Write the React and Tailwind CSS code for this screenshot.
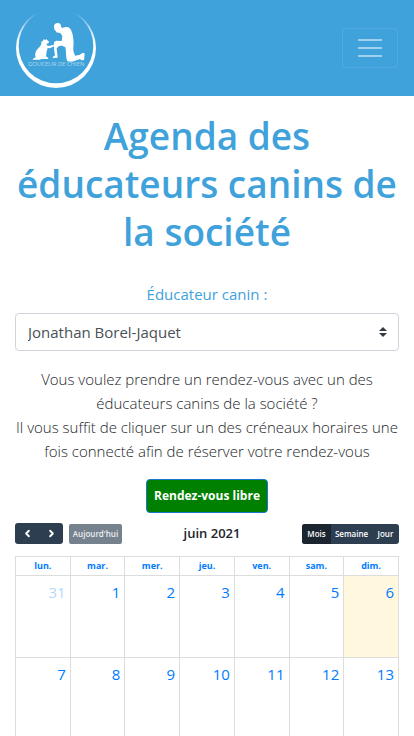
import { ChevronLeft, ChevronRight } from "lucide-react";

const days = ["lun.", "mar.", "mer.", "jeu.", "ven.", "sam.", "dim."];
const weeks = [
  [31, 1, 2, 3, 4, 5, 6],
  [7, 8, 9, 10, 11, 12, 13],
];

function Logo() {
  return (
    <svg viewBox="48 24 240 240" className="size-20" role="img" aria-label="Douceur de Chien">
      <defs>
        <linearGradient id="ring" x1="0" y1="36" x2="0" y2="130" gradientUnits="userSpaceOnUse">
          <stop offset="0" stopColor="#fff" stopOpacity="0" />
          <stop offset="0.35" stopColor="#fff" stopOpacity="0.5" />
          <stop offset="1" stopColor="#fff" />
        </linearGradient>
      </defs>
      <path
        fill="url(#ring)"
        fillRule="evenodd"
        d="M168 24a120 120 0 1 0 0 240a120 120 0 1 0 0-240zM168 26a112 112 0 1 1 0 224a112 112 0 1 1 0-224z"
      />
      <g fill="#fff">
        <path d="M162 80C161 73 167 69 173 69C180 69 184 74 183 80L187 84C194 81 203 80 209 84C216 92 219 105 220 118C222 130 219 143 220 152L225 167L240 164L247 159L254 160L252 180L244 181L240 177L216 185L202 184C197 173 199 153 196 142C190 137 181 136 176 139L170 145L173 173L158 174L159 170L165 166L162 147L162 126L169 122L185 123L187 109L182 100L169 97L168 93C163 91 163 86 162 80Z" />
        <path d="M124 125L129 122L131 118L137 120L139 117L142 121L147 125L146 129L140 131L140 136L147 138L161 134L162 139L150 145L143 144L140 154L138 169L145 174L144 177L124 177L119 179L98 179L99 176L107 172C103 161 109 149 118 142C123 137 124 131 124 125Z" />
      </g>
      <text x="169" y="198" textAnchor="middle" className="fill-white/80 font-['Open_Sans',sans-serif] text-[18px] font-light">
        DOUCEUR DE CHIEN
      </text>
    </svg>
  );
}

export default function App() {
  return (
    <div className="h-screen overflow-hidden bg-white font-['Open_Sans','Noto_Sans',sans-serif] text-[#212529]">
      <nav className="flex h-24 items-center justify-between bg-[#3fa2da] px-4">
        <a href="#accueil">
          <Logo />
        </a>
        <button
          type="button"
          aria-label="Menu"
          className="flex h-10 w-14 items-center justify-center rounded border border-white/10"
        >
          <svg viewBox="0 0 30 30" className="size-[30px]" stroke="#fff" strokeOpacity="0.5" strokeWidth="2">
            <path d="M3 7h24M3 15h24M3 23h24" />
          </svg>
        </button>
      </nav>

      <main className="px-[15px] pt-4 text-center">
        <h1 className="text-[37px] leading-12 font-semibold text-[#3fa2da]">
          Agenda des éducateurs canins de la société
        </h1>

        <label htmlFor="educateur" className="mt-[26px] block text-[15px] leading-6 text-[#3fa2da]">
          Éducateur canin :
        </label>
        <div className="relative mt-[7px]">
          <select
            id="educateur"
            className="block h-[38px] w-full appearance-none rounded border border-[#ced4da] bg-white px-3 text-[15px] text-[#495057]"
          >
            <option>Jonathan Borel-Jaquet</option>
          </select>
          <svg viewBox="0 0 4 5" className="pointer-events-none absolute top-[14px] right-3 h-[10px] w-2" fill="#343a40">
            <path d="M2 0L0 2h4zM2 5L0 3h4z" />
          </svg>
        </div>

        <p className="mt-4 text-[15px] leading-6 font-light">
          Vous voulez prendre un rendez-vous avec un des éducateurs canins de la société ?
          <br />
          Il vous suffit de cliquer sur un des créneaux horaires une fois connecté afin de réserver votre rendez-vous
        </p>

        <button
          type="button"
          className="mt-4 h-[34px] rounded border border-[#1b74c9] bg-[#008000] px-[7px] text-xs font-bold text-white"
        >
          Rendez-vous libre
        </button>

        <div className="mt-[10px] flex h-[21px] items-center justify-between">
          <div className="flex items-center gap-[6px]">
            <div className="flex h-[21px] overflow-hidden rounded-[3px] bg-[#2c3e50] text-white">
              <button type="button" aria-label="Précédent" className="flex w-6 items-center justify-center">
                <ChevronLeft size={11} strokeWidth={4} />
              </button>
              <button type="button" aria-label="Suivant" className="flex w-6 items-center justify-center">
                <ChevronRight size={11} strokeWidth={4} />
              </button>
            </div>
            <button type="button" disabled className="h-5 w-[53px] rounded-[2px] bg-[#75818d] text-[8px] font-semibold text-[#eef0f2]">
              Aujourd'hui
            </button>
          </div>
          <h2 className="text-[13px] font-semibold">juin 2021</h2>
          <div className="flex h-5 overflow-hidden rounded-[3px] bg-[#2c3e50] text-[8px] font-semibold text-white">
            <button type="button" className="w-[29px] bg-[#1a252f]">
              Mois
            </button>
            <button type="button" className="w-[41px]">
              Semaine
            </button>
            <button type="button" className="w-[27px]">
              Jour
            </button>
          </div>
        </div>

        <table className="mt-3 w-full table-fixed border-collapse text-[#007bff]">
          <thead>
            <tr className="h-[19px]">
              {days.map((day) => (
                <th key={day} scope="col" className="border border-[#ddd] p-0 text-[9px] leading-4 font-bold">
                  <a href="#jour">{day}</a>
                </th>
              ))}
            </tr>
          </thead>
          <tbody>
            {weeks.map((week) => (
              <tr key={week[0]} className="h-[82px]">
                {week.map((day) => (
                  <td
                    key={day}
                    className={
                      day === 6
                        ? "border border-[#ddd] bg-[#fff8df] p-0 align-top"
                        : "border border-[#ddd] p-0 align-top"
                    }
                  >
                    <a
                      href="#jour"
                      className={
                        day === 31
                          ? "block px-1 pt-1 text-right text-[15px] leading-6 opacity-30"
                          : "block px-1 pt-1 text-right text-[15px] leading-6"
                      }
                    >
                      {day}
                    </a>
                  </td>
                ))}
              </tr>
            ))}
          </tbody>
        </table>
      </main>
    </div>
  );
}
